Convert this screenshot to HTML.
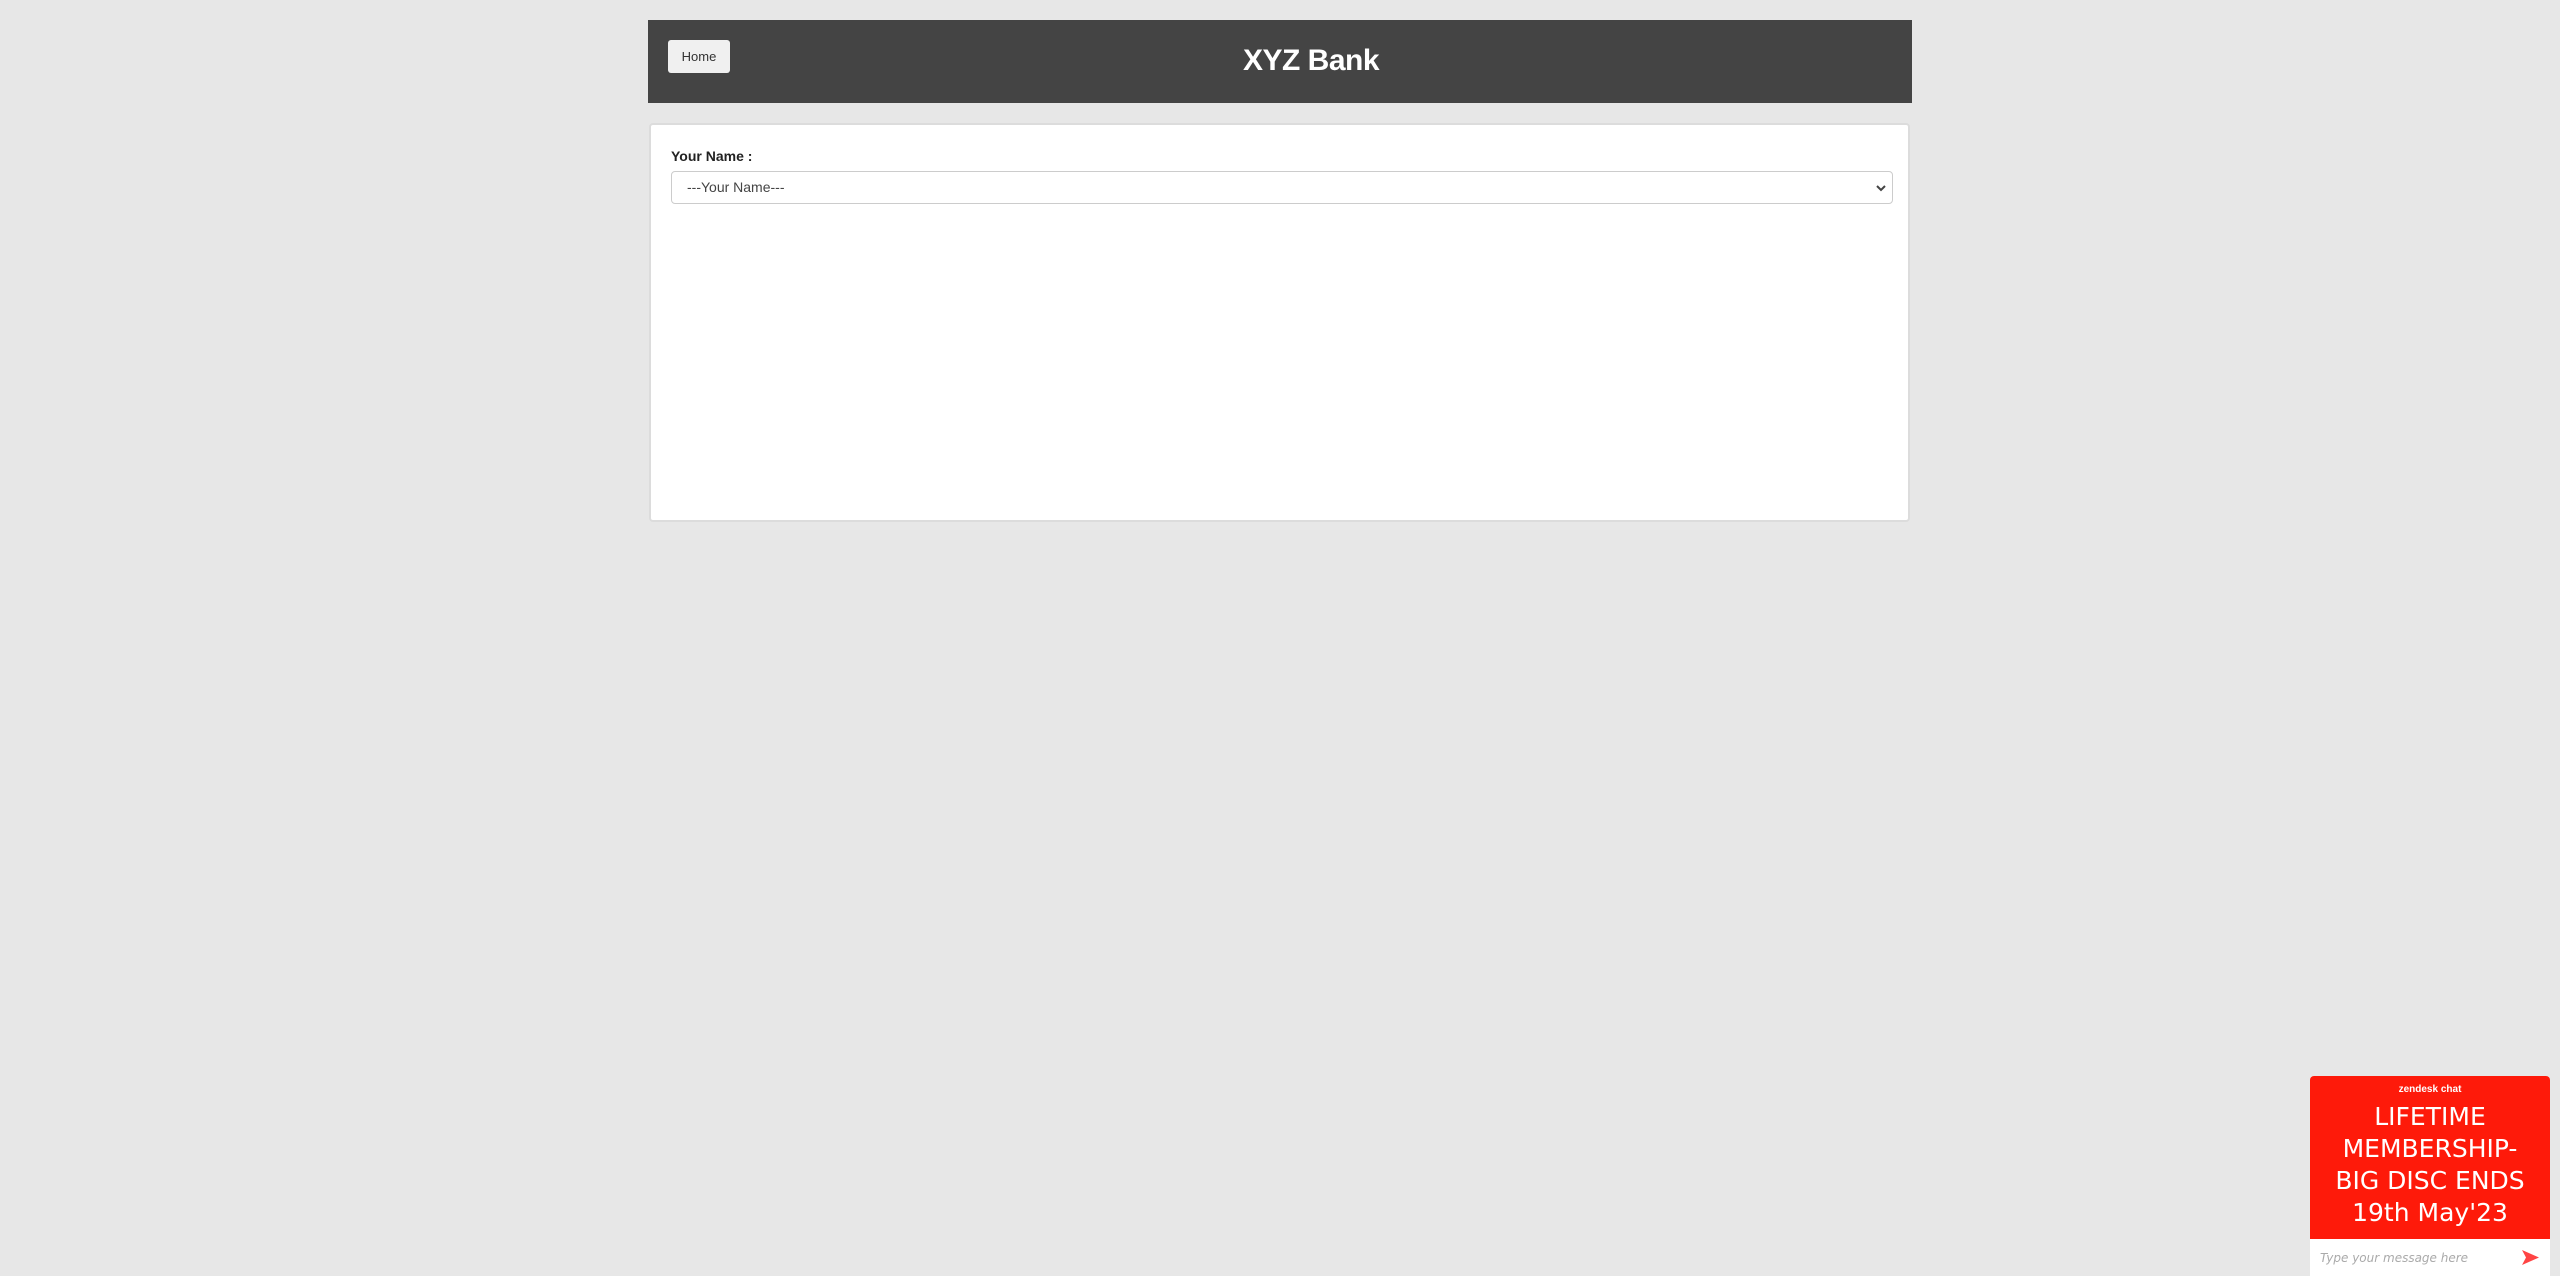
<!DOCTYPE html>
<html><head><meta charset="utf-8"><style>
html,body{margin:0;padding:0;width:2560px;height:1276px;background:#e7e7e7;overflow:hidden;font-family:"Liberation Sans",Arial,sans-serif;position:relative}
.hdr{position:absolute;left:648px;top:20px;width:1264px;height:83px;background:#444}
.home{position:absolute;left:20px;top:20px;width:62px;height:33px;background:#f0f0f0;border-radius:3px;font-size:13px;color:#333;line-height:33px;text-align:center}
.title{position:absolute;left:0;width:1326px;top:19px;text-align:center;font-size:30px;font-weight:bold;color:#fff;line-height:44px;letter-spacing:-0.5px}
.card{position:absolute;left:649px;top:123px;width:1257px;height:395px;background:#fff;border:2px solid #dcdcdc;border-radius:4px}
.lbl{position:absolute;left:20px;top:23px;font-size:14px;font-weight:bold;color:#222}
.sel{position:absolute;left:20px;top:46px;width:1220px;height:31px;border:1px solid #ccc;border-radius:4px;font-size:14px;color:#444;line-height:31px;box-sizing:content-box}
.sel span{padding-left:15px}
.chev{position:absolute;right:6px;top:12px}
.chat{position:absolute;left:2310px;top:1076px;width:240px;height:200px;background:#fff;border-radius:4px 4px 0 0;overflow:hidden}
.red{height:163px;background:#fe1a0a;color:#fff;text-align:center}
.zd{font-size:10px;font-weight:bold;padding-top:8px;line-height:12px}
.big{font-family:"DejaVu Sans",Verdana,sans-serif;font-size:25px;line-height:32px;margin-top:5px}
.inp{position:absolute;left:0;top:163px;width:240px;height:37px;font-family:"DejaVu Sans",Verdana,sans-serif;font-style:italic;font-size:12px;color:#aaa;line-height:38px;padding-left:10px;box-sizing:border-box}
</style></head><body>
<div class="hdr"><div class="home">Home</div><div class="title">XYZ Bank</div></div>
<div class="card"><div class="lbl">Your Name :</div>
<div class="sel"><span>---Your Name---</span><svg class="chev" width="10" height="8" viewBox="0 0 10 8"><path d="M1 2 L5 6 L9 2" stroke="#444" stroke-width="2" fill="none"/></svg></div></div>
<div class="chat"><div class="red"><div class="zd">zendesk chat</div><div class="big">LIFETIME<br>MEMBERSHIP-<br>BIG DISC ENDS<br>19th May'23</div></div>
<div class="inp">Type your message here<svg style="position:absolute;left:212px;top:11px" width="17" height="15" viewBox="0 0 17 15"><path d="M0 0 L17 7.5 L0 15 L4 7.5 Z" fill="#f44"/></svg></div></div>
</body></html>
